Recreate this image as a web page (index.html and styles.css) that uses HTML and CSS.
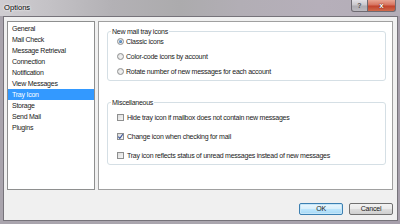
FILE: index.html
```html
<!DOCTYPE html>
<html>
<head>
<meta charset="utf-8">
<link rel="stylesheet" href="styles.css">
</head>
<body>
<div class="window">
  <div class="titlebar">
    <span class="title">Options</span>
    <div class="caption">
      <span class="cap-btn help">?</span>
      <span class="cap-btn close">x</span>
    </div>
  </div>
  <div class="client">
    <div class="main">
      <ul class="list">
        <li>General</li>
        <li>Mail Check</li>
        <li>Message Retrieval</li>
        <li>Connection</li>
        <li>Notification</li>
        <li>View Messages</li>
        <li class="selected">Tray Icon</li>
        <li>Storage</li>
        <li>Send Mail</li>
        <li>Plugins</li>
      </ul>
      <div class="panel">
        <fieldset class="group group-icons">
          <legend>New mail tray icons</legend>
          <div class="row"><span class="radio checked"></span><span>Classic icons</span></div>
          <div class="row"><span class="radio"></span><span>Color-code icons by account</span></div>
          <div class="row"><span class="radio"></span><span>Rotate number of new messages for each account</span></div>
        </fieldset>
        <fieldset class="group group-misc">
          <legend>Miscellaneous</legend>
          <div class="row"><span class="check"></span><span>Hide tray icon if mailbox does not contain new messages</span></div>
          <div class="row"><span class="check"><svg viewBox="0 0 7 7" width="7" height="7"><path d="M1.3 3.6 L2.8 5.3 L5.8 1.2" fill="none" stroke="#34519a" stroke-width="1.1"/></svg></span><span>Change icon when checking for mail</span></div>
          <div class="row"><span class="check"></span><span>Tray icon reflects status of unread messages instead of new messages</span></div>
        </fieldset>
      </div>
    </div>
    <div class="footer">
      <button class="btn default">OK</button>
      <button class="btn">Cancel</button>
    </div>
  </div>
</div>
</body>
</html>
```
FILE: styles.css
```css
html, body {
  margin: 0;
  padding: 0;
}
body {
  width: 400px;
  height: 224px;
  overflow: hidden;
  background: linear-gradient(to right, #a9a4ad, #aaa6ae 50%, #a69fab);
  font-family: "Liberation Sans", Arial, sans-serif;
  font-size: 7px;
  letter-spacing: -0.25px;
  color: #1a1a1a;
}
.window {
  width: 400px;
  height: 224px;
  display: flex;
  flex-direction: column;
}
.titlebar {
  height: 16px;
  display: flex;
  align-items: flex-start;
  background: linear-gradient(to right, #cfcdd1 0%, #c4c2c6 12%, #b3b1b5 28%, #acabad 45%, #b2aeb5 60%, #b6afba 80%, #b3adb7 100%);
}
.title {
  margin: 3px 0 0 4px;
  font-size: 7.6px;
  letter-spacing: 0;
  line-height: 9px;
  color: #000;
  text-shadow: 0 0 3px #fff, 0 0 2px #fff;
}
.caption {
  margin-left: auto;
  margin-right: 4px;
  display: flex;
}
.cap-btn {
  height: 12px;
  box-sizing: border-box;
  display: flex;
  align-items: center;
  justify-content: center;
  font-weight: bold;
  letter-spacing: 0;
  border: 1px solid #6e6a72;
  border-top: none;
}
.help {
  width: 17px;
  font-size: 7px;
  color: #555;
  border-radius: 0 0 0 3px;
  background: linear-gradient(to bottom, #e3e1e6 0%, #c9c7cc 45%, #aeacb2 55%, #bcbac0 100%);
}
.close {
  width: 28px;
  font-size: 8px;
  color: #fff;
  border-left: none;
  border-radius: 0 0 3px 0;
  text-shadow: 0 0 1px #5a1a10, 0 0 1px #5a1a10;
  background: linear-gradient(to bottom, #e8a593 0%, #d7735f 45%, #c2432c 55%, #d06a4c 100%);
}
.client {
  flex: 1;
  margin: 0 2px 3px 3px;
  border: 1px solid #76737a;
  background: #f0f0f0;
  padding: 4px 4px 0 3px;
  display: flex;
  flex-direction: column;
}
.main {
  height: 169px;
  display: flex;
  gap: 3px;
}
.list {
  width: 88px;
  box-sizing: border-box;
  margin: 0;
  padding: 1px 0 0 0;
  list-style: none;
  background: #fff;
  border: 1px solid #8e8f8f;
}
.list li {
  height: 11px;
  line-height: 11px;
  padding-left: 4px;
  white-space: nowrap;
}
.list li.selected {
  background: #3399ff;
  color: #fff;
}
.panel {
  flex: 1;
  box-sizing: border-box;
  background: #fff;
  border: 1px solid #a0a0a0;
  padding: 0 6px 0 8px;
  display: flex;
  flex-direction: column;
}
.group {
  margin: 5px 0 0 0;
  padding: 0 4px 4px 9px;
  border: 1px solid #d5dfe5;
  border-radius: 3px;
  min-inline-size: 0;
  display: flex;
  flex-direction: column;
}
.group legend {
  padding: 0 1px;
  margin-left: -6px;
  line-height: 9px;
  color: #1a1a1a;
}
.group-icons {
  gap: 5px;
}
.group-misc {
  margin-top: 17px;
  padding-top: 5px;
  gap: 9px;
}
.row {
  height: 10px;
  display: flex;
  align-items: center;
  gap: 2px;
  white-space: nowrap;
}
.radio {
  width: 7px;
  height: 7px;
  box-sizing: border-box;
  border-radius: 50%;
  border: 1px solid #8e8f8f;
  background: radial-gradient(circle at 60% 60%, #f4f4f4, #dcdcdc);
  display: flex;
  align-items: center;
  justify-content: center;
}
.radio.checked::after {
  content: "";
  width: 3px;
  height: 3px;
  border-radius: 50%;
  background: radial-gradient(circle at 40% 40%, #7ab0e0, #1b4f8f);
}
.check {
  width: 7px;
  height: 7px;
  box-sizing: border-box;
  border: 1px solid #8e8f8f;
  background: linear-gradient(135deg, #dcdcdc, #f6f6f6);
  display: flex;
  margin-right: 1px;
}
.check svg {
  margin: -1px;
}
.footer {
  flex: 1;
  display: flex;
  justify-content: flex-end;
  align-items: flex-start;
  padding-top: 13px;
  gap: 6px;
}
.btn {
  width: 44px;
  height: 12px;
  box-sizing: border-box;
  padding: 0;
  margin: 0;
  font-family: "Liberation Sans", Arial, sans-serif;
  font-size: 7px;
  letter-spacing: -0.2px;
  color: #1a1a1a;
  border: 1px solid #707070;
  border-radius: 2px;
  background: linear-gradient(to bottom, #f2f2f2 0%, #ebebeb 45%, #dddddd 50%, #cfcfcf 100%);
  line-height: 10px;
}
.btn.default {
  border-color: #3c7fb1;
  background: linear-gradient(to bottom, #eaf6fd 0%, #d9f0fc 45%, #bee6fd 50%, #a7d9f5 100%);
  box-shadow: inset 0 0 0 1px #c6e6f8;
}
```
